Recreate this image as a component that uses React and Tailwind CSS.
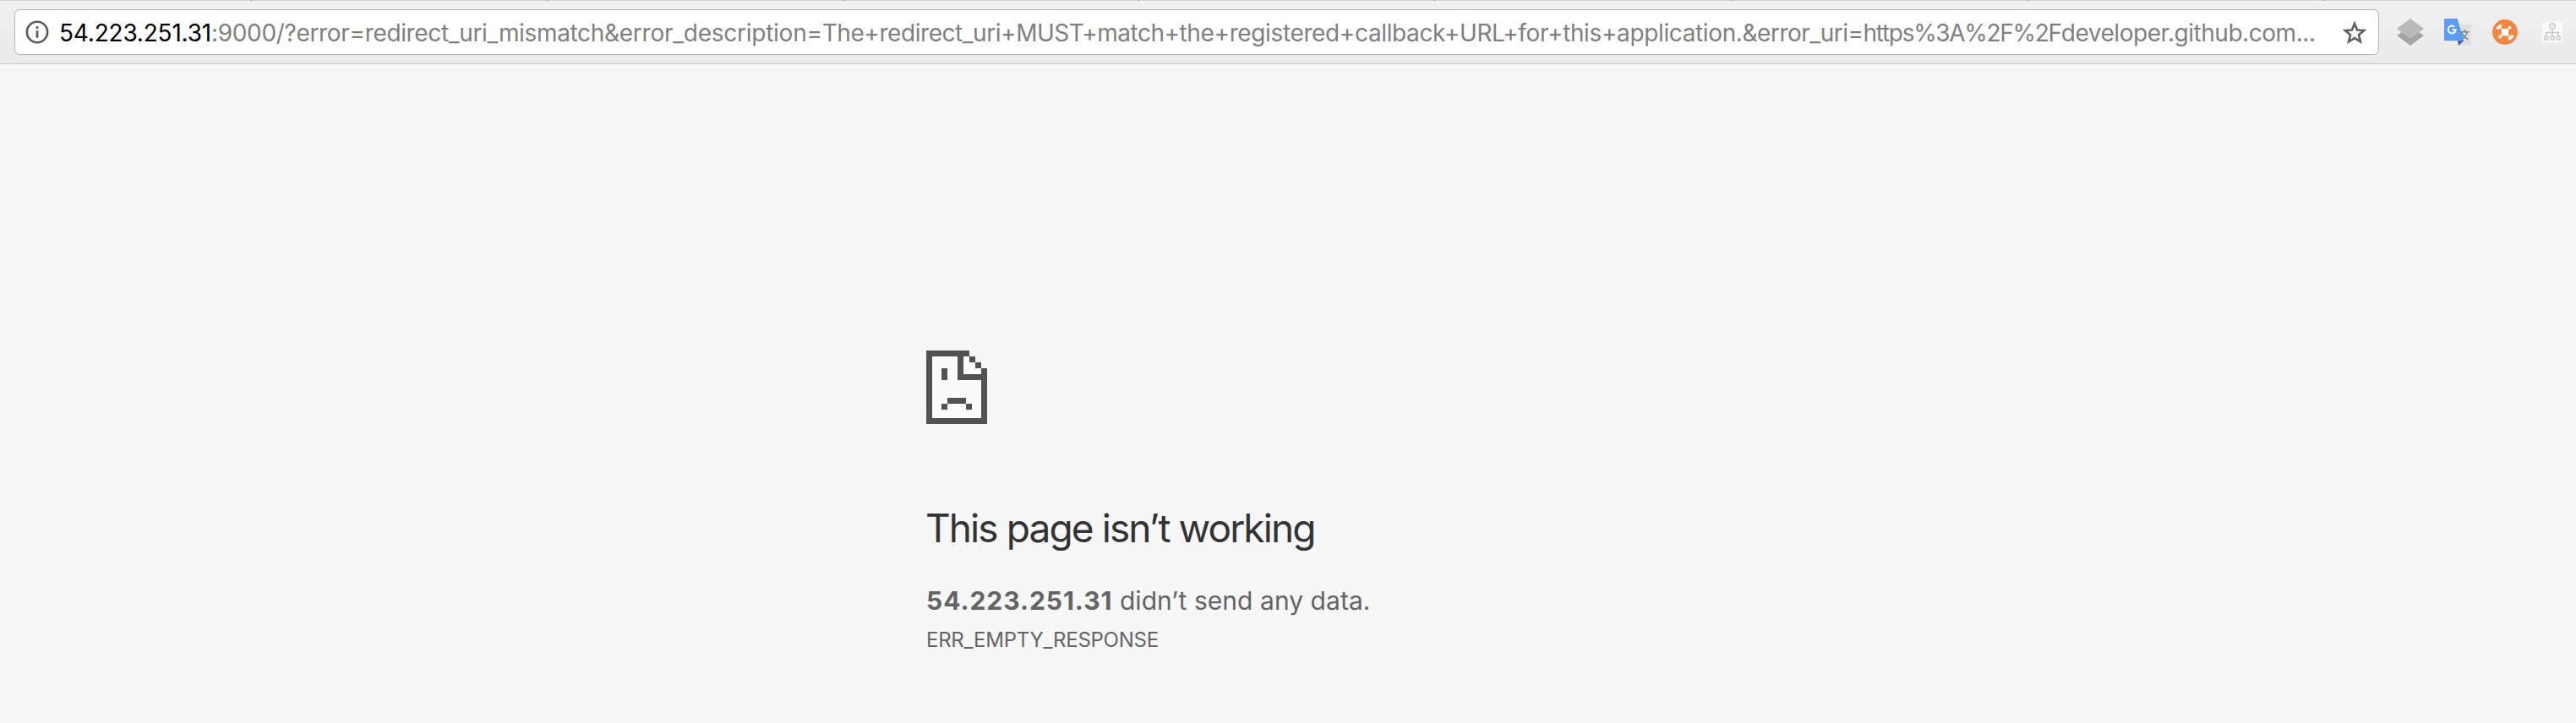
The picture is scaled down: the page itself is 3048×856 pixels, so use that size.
const TAB_WIDTHS = [298, 350, 351, 349, 350, 352, 350, 350];

function TabEdge() {
  return (
    <div className="flex h-px w-full bg-[#d2d2d2]">
      {TAB_WIDTHS.map((w, i) => (
        <div key={i} className="h-px shrink-0 border-r border-[#8a8a8a]" style={{ width: w }} />
      ))}
    </div>
  );
}

function InfoIcon() {
  return (
    <svg className="size-7 shrink-0" viewBox="0 0 28 28" fill="none">
      <circle cx="14" cy="14" r="12.2" stroke="#5a5a5a" strokeWidth="2.6" />
      <rect x="12.6" y="7.2" width="2.8" height="2.8" fill="#5a5a5a" />
      <rect x="12.6" y="12.2" width="2.8" height="8.6" fill="#5a5a5a" />
    </svg>
  );
}

function StarIcon() {
  return (
    <svg className="size-[30px] shrink-0" viewBox="0 0 32 32" fill="none">
      <path
        d="M16 4.2l3.3 8 8.6.7-6.6 5.6 2.1 8.5L16 22.5l-7.4 4.5 2.1-8.5-6.6-5.6 8.6-.7z"
        stroke="#606060"
        strokeWidth="2.8"
        strokeMiterlimit="10"
      />
    </svg>
  );
}

function LayersIcon() {
  return (
    <svg className="size-8 shrink-0" viewBox="0 0 32 32">
      <path d="M0 20L16 9.2 32 20 16 32z" fill="#a5a5a5" />
      <path d="M0 12L16 0l16 12-16 12z" fill="#b9b9b9" />
    </svg>
  );
}

function TranslateIcon() {
  return (
    <svg className="size-8 shrink-0" viewBox="0 0 32 32" fill="none">
      <path d="M12 7h19a1 1 0 011 1v23a1 1 0 01-1 1H17z" fill="#e0e0e0" />
      <path
        d="M19 15.8h10.500M24.300 13v2.800M19.400 24.600c4.400-1.600 7-4.800 7.600-8.600M20.800 16.500c.8 3.300 3.400 6.100 7.600 8"
        stroke="#6f8790"
        strokeWidth="1.6"
      />
      <path d="M16 26h7.500L17 32z" fill="#3b5fc0" />
      <path d="M1.500 0H15.500L23.500 26.200H1.500A1.500 1.500 0 010 24.700V1.500A1.500 1.500 0 011.500 0z" fill="#5b9cf0" />
      <path d="M12.300 9.700A4.500 4.500 0 1013.700 13.300H9.400" stroke="#fff" strokeWidth="2" />
    </svg>
  );
}

function DroneIcon() {
  return (
    <svg className="size-[30px] shrink-0" viewBox="0 0 30 30" fill="none">
      <circle cx="15" cy="15" r="15" fill="#f68541" />
      <rect x="10.8" y="11" width="8.4" height="8.4" rx="2" fill="#fff" />
      <path d="M8.500 9l13 12.500M20.500 9.500L9.500 20.500" stroke="#fff" strokeWidth="1.5" />
      <path d="M5.500 11.300l5-4.700M19.500 23.700l5-4.700" stroke="#fff" strokeWidth="3.4" />
      <circle cx="20.400" cy="9.700" r="1.9" fill="#fff" />
      <circle cx="9.200" cy="20.500" r="1.9" fill="#fff" />
    </svg>
  );
}

function SitemapIcon() {
  return (
    <svg className="size-6 shrink-0" viewBox="0 0 24 24" fill="none">
      <rect width="24" height="24" rx="4" fill="#fbfbfb" />
      <g stroke="#c6c6c6" strokeWidth="1.4">
        <circle cx="12" cy="5" r="3.3" />
        <path d="M12 3.500v2.500M12 8.300V17M4.800 17v-4.500h14.400V17" />
        <circle cx="4.800" cy="19" r="2.2" />
        <circle cx="12" cy="19" r="2.2" />
        <circle cx="19.200" cy="19" r="2.2" />
      </g>
    </svg>
  );
}

function SadPageIcon() {
  return (
    <svg className="h-[87px] w-[72px]" viewBox="0 0 72 87" shapeRendering="crispEdges">
      <path d="M0 0H51V7H58V14H65V21H72V87H0Z" fill="#fafafa" />
      <g fill="#525252">
        <path d="M0 0H51V7H44V28H65V21H72V87H0ZM7 7V80H65V35H37V7Z" />
        <path d="M51 7h7v7h-7zM58 14h7v7h-7z" />
        <path d="M18 21h7v14h-7zM25 56h22v7H25zM18 63h7v7h-7zM47 63h7v7h-7z" />
      </g>
    </svg>
  );
}

function AddressBar() {
  return (
    <div className="ml-[17px] flex h-[54px] w-[2798px] shrink-0 items-center rounded-[6px] border border-[#b4b4b4] bg-white pl-3">
      <InfoIcon />
      <div className="ml-3 w-[2684px] shrink-0 whitespace-nowrap pt-0.5 text-[28px] leading-[34px] text-[#808080]">
        <span className="tracking-[-0.2px] text-black">54.223.251.31</span>
        <span className="tracking-[-0.34px]">:9000/?error=redirect_uri_mismatch</span>
        <span className="tracking-[-0.25px]">&amp;error_description=</span>
        <span className="tracking-[-0.44px]">The+redirect_uri+</span>
        <span className="tracking-[-0.5px]">MUST+match+</span>
        <span className="tracking-[-0.37px]">the+registered+callback+URL+for+this+application.</span>
        <span className="tracking-[-0.49px]">&amp;error_uri=</span>
        <span className="tracking-[-1.3px]">https%3A%2F%2F</span>
        <span className="tracking-[-0.46px]">developer.github.com...</span>
      </div>
      <div className="ml-[17px] flex shrink-0 items-center pt-0.5">
        <StarIcon />
      </div>
    </div>
  );
}

export default function App() {
  return (
    <div className="h-[856px] w-full overflow-hidden bg-[#f7f7f7] font-['Inter','Liberation_Sans',sans-serif]">
      <header className="flex h-[76px] flex-col border-b border-[#cbcbcb] bg-linear-to-b from-[#f1f1f1] to-[#eaeaea]">
        <TabEdge />
        <div className="flex items-center pt-[10px]">
          <AddressBar />
          <div className="ml-[21px] flex items-center">
            <LayersIcon />
            <div className="ml-6 flex"><TranslateIcon /></div>
            <div className="ml-[25px] flex"><DroneIcon /></div>
            <div className="ml-[29px] flex"><SitemapIcon /></div>
          </div>
        </div>
      </header>
      <main className="pl-[1096px] pt-[339px]">
        <SadPageIcon />
        <h1 className="-ml-px mt-[95px] whitespace-nowrap text-[46px] leading-[56px] tracking-[-1.9px] text-[#333333]">
          This page isn’t working
        </h1>
        <p className="mt-[35px] whitespace-nowrap text-[30px] leading-[46px] tracking-[0.05px] text-[#646464]">
          <strong className="font-bold tracking-[0.98px]">54.223.251.31</strong> didn’t send any data.
        </p>
        <p className="mt-px whitespace-nowrap text-[24px] leading-[46px] tracking-[-0.25px] text-[#646464]">
          ERR_EMPTY_RESPONSE
        </p>
      </main>
    </div>
  );
}
